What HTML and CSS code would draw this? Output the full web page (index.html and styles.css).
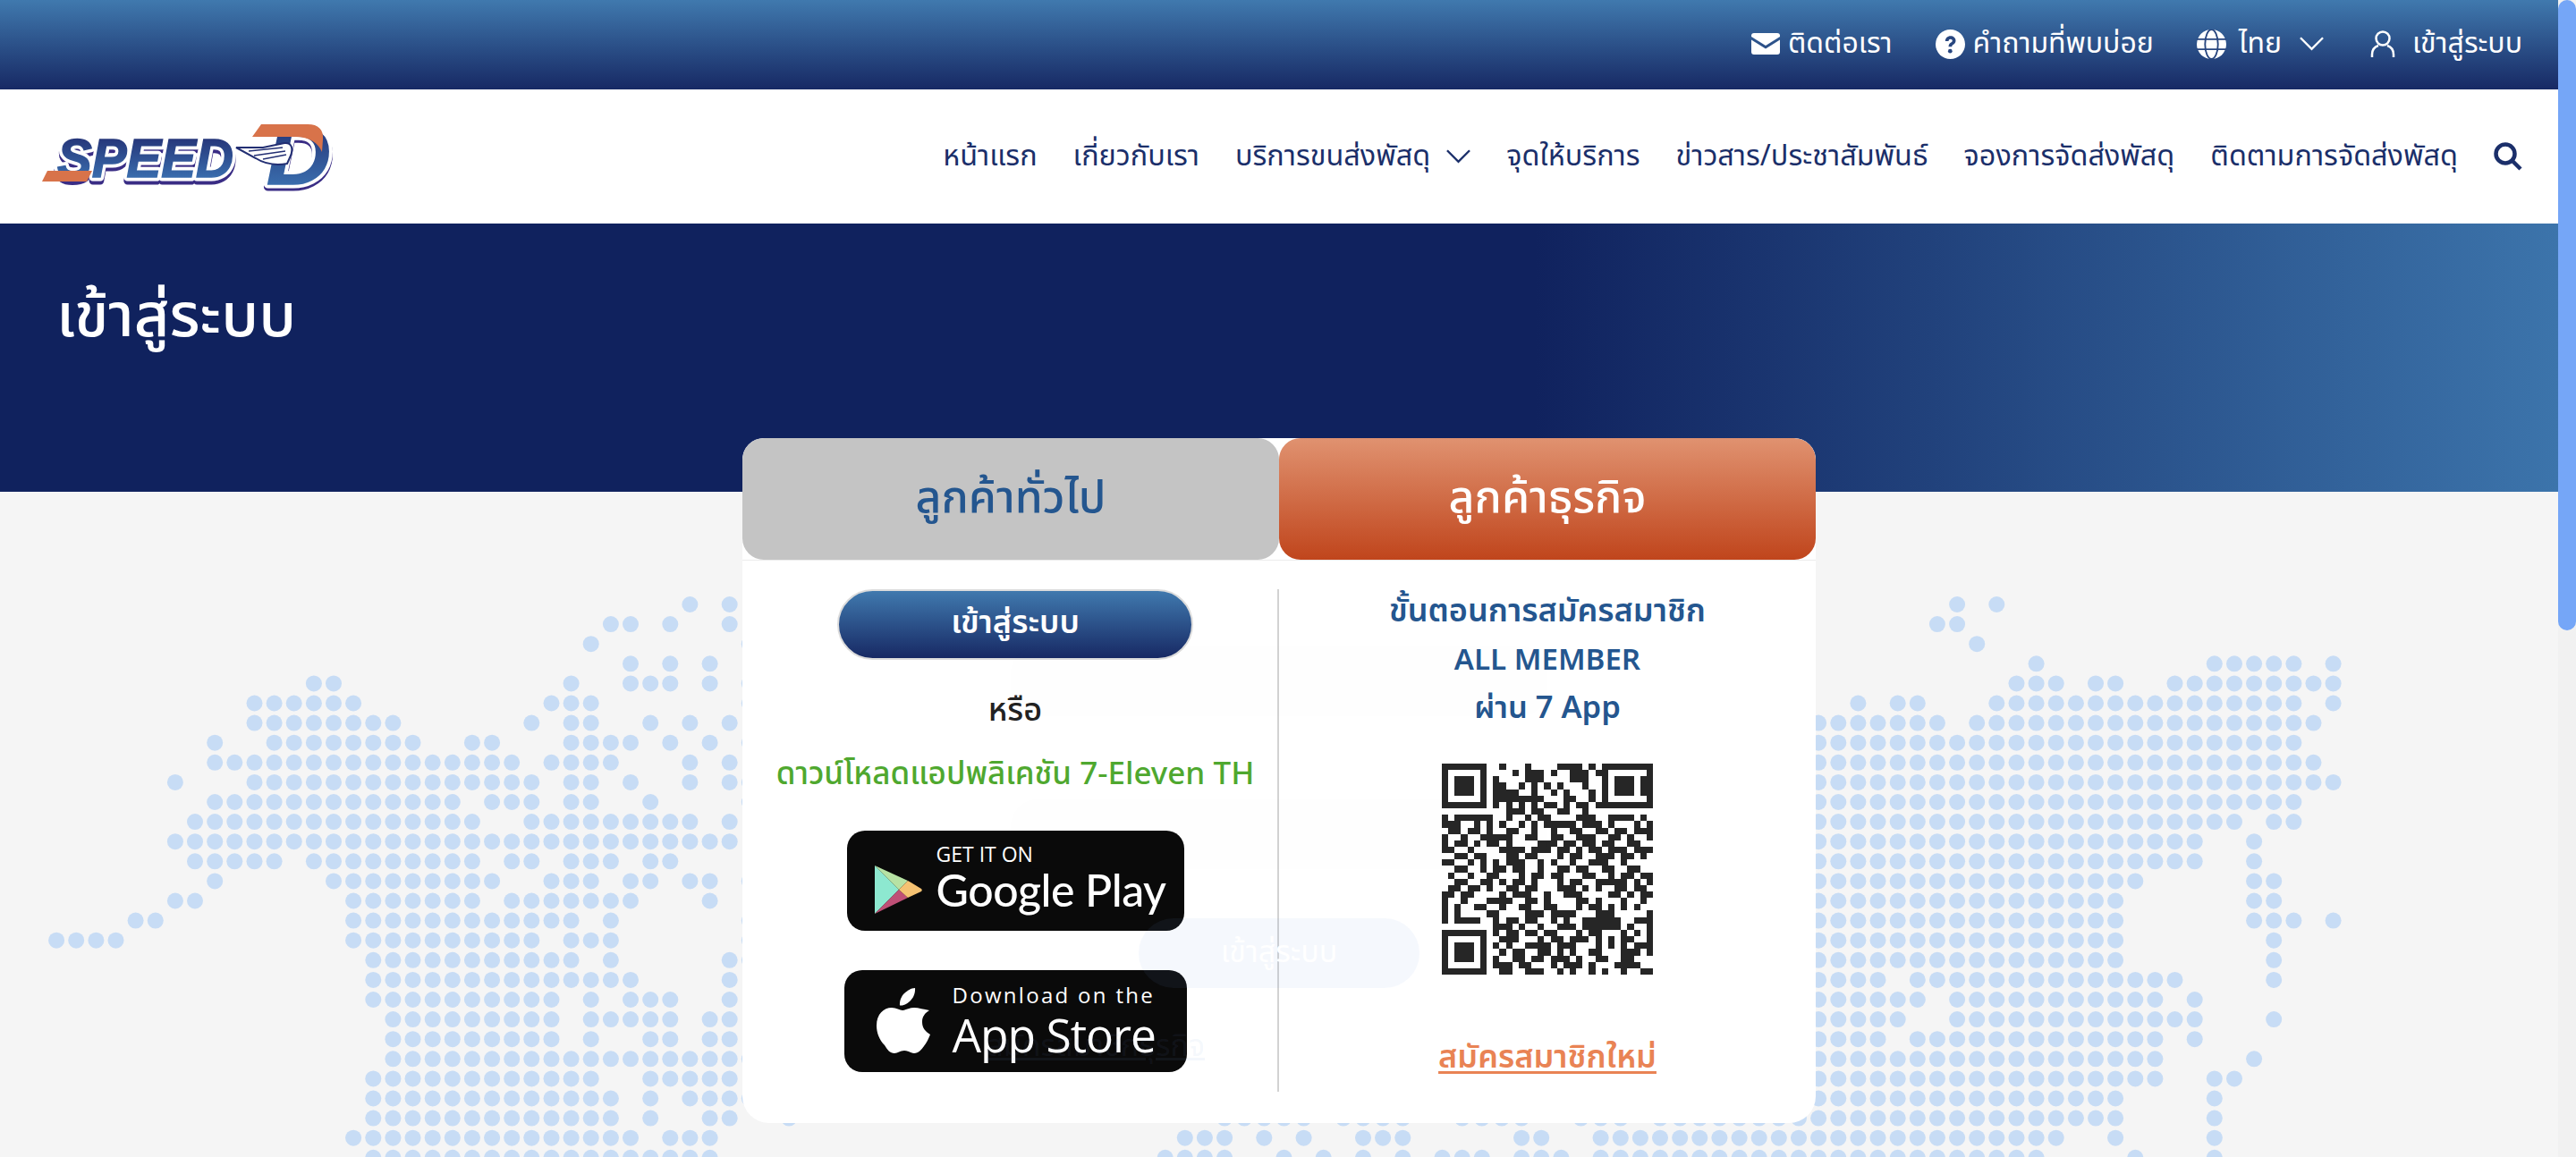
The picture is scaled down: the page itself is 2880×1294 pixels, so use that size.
FILE: index.html
```html
<!DOCTYPE html>
<html lang="th">
<head>
    <meta charset="UTF-8">
    <meta name="viewport" content="width=device-width, initial-scale=1.0">
    <title>เข้าสู่ระบบ</title>
    <link rel="stylesheet" href="styles.css">
</head>
<body>
<div class="window">
    <div class="page">
        <div class="topbar">
            <a class="toplink">
                <svg class="ico-mail" viewBox="0 0 32 24"><path d="M3 0h26a3 3 0 0 1 3 3v1L16 14 0 4V3a3 3 0 0 1 3-3z"/><path d="M0 7.500l16 10 16-10V21a3 3 0 0 1-3 3H3a3 3 0 0 1-3-3z"/></svg>
                ติดต่อเรา
            </a>
            <a class="toplink">
                <svg class="ico-round" viewBox="0 0 32 32"><circle cx="16" cy="16" r="16" fill="#fff"/><path d="M10.500 12.500c0-3.200 2.500-5.500 5.700-5.500 3.100 0 5.600 2 5.600 5 0 2.300-1.300 3.500-2.800 4.500-1 .7-1.300 1.100-1.300 2.200h-3.600c0-2.300.8-3.300 2.300-4.300 1.100-.8 1.800-1.300 1.800-2.300 0-1-.9-1.700-2-1.700-1.200 0-2 .8-2.100 2.100z" fill="#28467f"/><circle cx="15.800" cy="23.500" r="2.300" fill="#28467f"/></svg>
                คำถามที่พบบ่อย
            </a>
            <a class="toplink lang">
                <svg class="ico-round" viewBox="0 0 32 32"><circle cx="16" cy="16" r="16" fill="#fff"/><g fill="none" stroke="#28467f" stroke-width="1.800"><ellipse cx="16" cy="16" rx="7" ry="16"/><path d="M0 10.500h32M0 21.500h32"/></g></svg>
                ไทย
                <svg class="ico-chev" viewBox="0 0 28 16"><path d="M1 1l13 13L27 1"/></svg>
            </a>
            <a class="toplink">
                <svg class="ico-user" viewBox="0 0 28 32"><circle cx="14" cy="10" r="7.500"/><path d="M2 31v-3c0-6 4-9 7-10M26 31v-3c0-6-4-9-7-10"/></svg>
                เข้าสู่ระบบ
            </a>
        </div>

        <div class="navbar">
            <svg class="logo" viewBox="0 0 360 110">
                <defs>
                    <linearGradient id="logoBlue" x1="0" y1="0" x2="0" y2="1">
                        <stop offset="0.1" stop-color="#232f73"/>
                        <stop offset="1" stop-color="#3f7cbb"/>
                    </linearGradient>
                </defs>
                <path class="logo-back" d="M20 78l12-8h45l-6 18H20z"/>
                <text class="logo-text logo-shadow" x="38" y="83" textLength="197" lengthAdjust="spacingAndGlyphs">SPEED</text>
                <text class="logo-text logo-halo" x="38" y="79" textLength="197" lengthAdjust="spacingAndGlyphs">SPEED</text>
                <text class="logo-text logo-fill" x="38" y="79" textLength="197" lengthAdjust="spacingAndGlyphs">SPEED</text>
                <path fill="#d8734a" d="M27 72h50l-6 12H21z"/>
                <text class="logo-d logo-shadow" x="272" y="90" textLength="72" lengthAdjust="spacingAndGlyphs">D</text>
                <text class="logo-d logo-halo" x="272" y="87" textLength="72" lengthAdjust="spacingAndGlyphs">D</text>
                <text class="logo-d logo-fill" x="272" y="87" textLength="72" lengthAdjust="spacingAndGlyphs">D</text>
                <path fill="#d8734a" d="M256 34l10-14h52c12 0 18 6 17 17l-1 14c-4-10-14-17-30-17z"/>
                <path fill="#fff" stroke="#232f73" stroke-width="2" d="M238 46h30l24-5c8-1 10 6 7 14l-4 9c-12 2-24 1-35-6z"/>
                <path fill="none" stroke="#232f73" stroke-width="1.500" d="M252 50l38-4M258 55l35-5M268 59l26-5"/>
            </svg>
            <nav class="menu">
                <a>หน้าแรก</a>
                <a>เกี่ยวกับเรา</a>
                <a class="has-sub">บริการขนส่งพัสดุ <svg class="ico-chev" viewBox="0 0 28 16"><path d="M1 1l13 13L27 1"/></svg></a>
                <a>จุดให้บริการ</a>
                <a>ข่าวสาร/ประชาสัมพันธ์</a>
                <a>จองการจัดส่งพัสดุ</a>
                <a>ติดตามการจัดส่งพัสดุ</a>
                <svg class="ico-search" viewBox="0 0 32 32"><circle cx="13" cy="13" r="10.500"/><path d="M21 21l9 9"/></svg>
            </nav>
        </div>

        <div class="band">
            <h1>เข้าสู่ระบบ</h1>
        </div>

        <div class="content">
            <svg id="worldMap" class="world" width="2860" height="744"></svg>

            <div class="card">
                <div class="tabs">
                    <div class="tab tab-general">ลูกค้าทั่วไป</div>
                    <div class="tab tab-business">ลูกค้าธุรกิจ</div>
                </div>
                <div class="card-body">
                    <div class="col col-left">
                        <a class="btn-login">เข้าสู่ระบบ</a>
                        <div class="or">หรือ</div>
                        <div class="download">ดาวน์โหลดแอปพลิเคชัน 7-Eleven TH</div>
                        <a class="badge badge-play">
                            <svg class="play-mark" viewBox="0 0 54 58">
                                <path fill="#8de8d0" d="M1 2v54l27-27z"/>
                                <path fill="#b7e2a4" d="M1 2l27 27 10-10z"/>
                                <path fill="#bf4f76" d="M1 56l37-18-10-9z"/>
                                <path fill="#f5c272" d="M38 19l15 9c1 1 1 2 0 3l-15 7-10-9z"/>
                            </svg>
                            <span class="badge-text">
                                <span class="small">GET IT ON</span>
                                <span class="big">Google Play</span>
                            </span>
                        </a>
                        <a class="badge badge-apple">
                            <svg class="apple-mark" viewBox="0 0 60 74">
                                <path d="M43 0c.5 6-2 11-5 14-3 3-7 6-12 5.500C25.500 14 28 9 31 6c3-3 8-6 12-6z"/>
                                <path d="M59 25c-5 3-8 7-8 13 0 7 4 11 9 14-2 5-4 9-7 13-3 4-6 8-11 8-4 0-6-3-11-3s-7 3-11 3c-5 0-8-4-11-9C3 58 0 50 0 42c0-13 8-20 17-20 5 0 9 3 12 3s7-3 13-3c5 0 11 2 17 3z"/>
                            </svg>
                            <span class="badge-text">
                                <span class="small">Download on the</span>
                                <span class="big">App Store</span>
                            </span>
                        </a>
                    </div>
                    <div class="col col-right">
                        <div class="steps">
                            <div class="step-thai">ขั้นตอนการสมัครสมาชิก</div>
                            <div class="step-latin">ALL MEMBER</div>
                            <div class="step-app">ผ่าน 7 App</div>
                        </div>
                        <svg id="qrCode" class="qr" viewBox="0 0 33 33" shape-rendering="crispEdges"></svg>
                        <a class="signup">สมัครสมาชิกใหม่</a>
                    </div>
                </div>

                <!-- the form behind the popup shows through a little -->
                <div class="ghost">
                    <div class="ghost-label">อีเมล</div>
                    <div class="ghost-input">ระบุอีเมล</div>
                    <div class="ghost-label">รหัสผ่าน</div>
                    <div class="ghost-input"></div>
                    <div class="ghost-btn">เข้าสู่ระบบ</div>
                    <div class="ghost-link">สมัครสมาชิกธุรกิจ</div>
                </div>
            </div>
        </div>
    </div>
    <div class="scrollbar"><div class="thumb"></div></div>
</div>
<script src="page.js"></script>
</body>
</html>
```

FILE: styles.css
```css
html, body { margin: 0; padding: 0; height: 100%; overflow: hidden; }
body { font-family: "Noto Sans Thai", "Noto Sans", "Open Sans", sans-serif; background: #f5f5f5; }
a { color: inherit; text-decoration: none; }

.window { display: flex; height: 1294px; }
.page { flex: 1; min-width: 0; display: flex; flex-direction: column; overflow: hidden; }
.scrollbar { width: 20px; background: #f1f1f1; }
.thumb { height: 705px; background: #75a6f7; border-radius: 10px; }

.topbar {
    height: 100px;
    flex: none;
    box-sizing: border-box;
    padding: 0 40px 2px 0;
    display: flex;
    justify-content: flex-end;
    align-items: center;
    gap: 48px;
    color: #fff;
    font-size: 32px;
    background: linear-gradient(#4079ae, #172964);
}
.toplink { display: flex; align-items: center; gap: 9px; white-space: nowrap; }
.toplink.lang { gap: 14px; }
.ico-mail { width: 32px; height: 24px; fill: #fff; }
.ico-round { width: 33px; height: 33px; }
.ico-chev { width: 27px; height: 16px; fill: none; stroke: currentColor; stroke-width: 2.500; }
.ico-user { width: 28px; height: 32px; fill: none; stroke: #fff; stroke-width: 2.500; margin-right: 10px; }
.lang .ico-chev { margin: 0 4px 0 6px; }

.navbar {
    height: 150px;
    flex: none;
    box-sizing: border-box;
    background: #fff;
    padding: 0 40px 0 26px;
    display: flex;
    align-items: center;
    justify-content: space-between;
    position: relative;
    z-index: 1;
}
.logo { width: 360px; height: 110px; margin-top: -2px; }
.logo-text { font: italic 700 62px "Liberation Sans", sans-serif; }
.logo-d { font: italic 700 92px "Liberation Sans", sans-serif; }
.logo-shadow { fill: #3a2d85; stroke: #3a2d85; stroke-width: 9px; stroke-linejoin: round; }
.logo-halo { fill: #fff; stroke: #fff; stroke-width: 9px; stroke-linejoin: round; }
.logo-fill { fill: url(#logoBlue); stroke: url(#logoBlue); stroke-width: 1.500px; }
.logo-back { fill: #fff; }

.menu { display: flex; align-items: center; gap: 40px; color: #1b2f6a; font-size: 32.400px; white-space: nowrap; }
.has-sub { display: flex; align-items: center; gap: 18px; }
.ico-search { width: 32px; height: 32px; fill: none; stroke: #1b2f6a; stroke-width: 4.500; }

.band {
    height: 300px;
    flex: none;
    box-sizing: border-box;
    padding: 60px 63px;
    background: linear-gradient(90deg, #10225e 60%, #3c74ab 100%);
}
.band h1 { margin: 0; color: #fff; font-size: 68.500px; font-weight: 500; line-height: 90px; }

.content { flex: 1; position: relative; }
.world { position: absolute; left: 0; top: 0; fill: #c7dcf5; }

.card {
    position: relative;
    width: 1200px;
    margin: -60px 0 0 830px;
    height: 766px;
    box-sizing: border-box;
    background: #fff;
    border-radius: 24px 24px 30px 30px;
    overflow: hidden;
    display: flex;
    flex-direction: column;
}
.tabs { display: flex; height: 136px; flex: none; border-bottom: 1px solid #ececec; }
.tab {
    flex: 1;
    display: flex;
    align-items: center;
    justify-content: center;
    font-size: 50px;
    font-weight: 500;
    border-radius: 24px;
}
.tab-general { background: #c4c4c4; color: #24568f; }
.tab-business { background: linear-gradient(#e09270, #c0451c); color: #fff; }

.card-body { flex: 1; display: flex; padding-top: 32px; }
.col { width: 600px; box-sizing: border-box; height: 562px; display: flex; flex-direction: column; align-items: center; }
.col-left { border-right: 2px solid #d2d2d2; padding-left: 12px; }

.btn-login {
    width: 398px;
    height: 79px;
    flex: none;
    box-sizing: border-box;
    padding-bottom: 3px;
    border: 2px solid #dcdcdc;
    border-radius: 40px;
    background: linear-gradient(#4079ae, #172964);
    color: #fff;
    font-size: 36px;
    font-weight: 600;
    display: flex;
    align-items: center;
    justify-content: center;
}
.or { margin-top: 33px; font-size: 36px; font-weight: 500; color: #222; line-height: 48px; }
.download { margin-top: 24px; font-size: 35px; font-weight: 500; color: #4fa82f; line-height: 48px; white-space: nowrap; }

.badge {
    display: flex;
    align-items: center;
    flex: none;
    box-sizing: border-box;
    background: #0a0a0a;
    border-radius: 20px;
    color: #fff;
}
.badge-text { display: flex; flex-direction: column; }
.badge-play { width: 377px; height: 112px; margin-top: 38px; padding-left: 30px; gap: 16px; }
.badge-play .badge-text { margin-top: -5px; }
.badge-apple { width: 383px; height: 114px; margin-top: 44px; padding-left: 36px; gap: 25px; }
.play-mark { width: 54px; height: 58px; margin-top: 20px; }
.apple-mark { width: 60px; height: 74px; fill: #fff; }
.badge-play .small { font: 400 23px/24px "Open Sans", sans-serif; }
.badge-play .big { font: 500 50px/56px Lato, sans-serif; letter-spacing: -0.5px; }
.badge-apple .small { font: 400 24px/30px "Open Sans", sans-serif; letter-spacing: 2.300px; }
.badge-apple .big { font: 400 51.500px/58px "Open Sans", sans-serif; letter-spacing: -1px; }

.steps { color: #24568f; font-weight: 600; line-height: 54.500px; text-align: center; margin-top: -2px; }
.step-thai { font-size: 36px; }
.step-latin { font-size: 33px; }
.step-app { font-size: 34.500px; }
.qr { width: 236px; height: 236px; margin-top: 33px; fill: #262626; }
.signup {
    margin-top: 66px;
    color: #e98354;
    font-size: 36px;
    font-weight: 600;
    text-decoration: underline;
    text-underline-offset: 4px;
}

.ghost {
    position: absolute;
    left: 300px;
    top: 170px;
    width: 600px;
    display: flex;
    flex-direction: column;
    align-items: center;
    font-size: 34px;
    pointer-events: none;
}
.ghost-label { align-self: flex-start; color: rgba(60, 80, 130, 0.025); line-height: 50px; margin-bottom: 13px; }
.ghost-input {
    align-self: stretch;
    height: 78px;
    margin-bottom: 30px;
    padding-left: 55px;
    line-height: 78px;
    color: rgba(60, 80, 130, 0.025);
    background: rgba(90, 120, 180, 0.008);
    border-radius: 30px;
}
.ghost-btn {
    position: absolute;
    top: 367px;
    width: 314px;
    height: 78px;
    line-height: 78px;
    text-align: center;
    color: #fff;
    background: rgba(110, 150, 220, 0.07);
    border-radius: 39px;
}
.ghost-link {
    position: absolute;
    top: 485px;
    left: -100px;
    width: 317px;
    text-align: right;
    white-space: nowrap;
    color: rgba(110, 150, 220, 0.08);
    text-decoration: underline;
}
```

FILE: page.js
```js
// dot map rows: [from, to] ranges of filled columns, 22.135px grid
const ranges = {
    0: [[32],[34],[96],[98]],
    1: [[28,29],[31],[34],[95,96]],
    2: [[27],[35],[97]],
    3: [[29],[31],[33],[100],[109,113],[115]],
    4: [[13,14],[26],[29,31],[33],[35],[99,101],[103,104],[107,115]],
    5: [[10,15],[25,27],[35],[91],[93,94],[98,113],[115]],
    6: [[10,17],[24],[26,27],[30],[32],[34],[89,95],[97,114]],
    7: [[8],[11,18],[21,22],[26,29],[31],[33],[35],[89,113]],
    8: [[8,23],[25,28],[32],[34],[89,114]],
    9: [[6],[10,24],[26,27],[29],[32],[34,35],[89,115]],
    10: [[8,20],[22,24],[26,27],[30],[35],[89,113]],
    11: [[7,21],[24,32],[34],[89,110],[112,113]],
    12: [[6,34],[89,108],[111]],
    13: [[7,11],[13,21],[23,24],[26,28],[30,31],[89,108],[111]],
    14: [[8],[14,22],[25,27],[29,30],[32,33],[35],[89,105],[111,112]],
    15: [[6,7],[15,21],[23,29],[33],[89,104],[111,112]],
    16: [[4,5],[15,26],[28],[35],[89,104],[111,113],[115]],
    17: [[0,3],[15,24],[26,28],[35],[89,104],[112]],
    18: [[16,26],[28],[34,35],[89,104],[112]],
    19: [[16,29],[34],[89,92],[94,107],[112]],
    20: [[16,25],[27],[29,31],[34],[89,94],[96,106],[108]],
    21: [[17,25],[27,31],[33,34],[89,93],[96,108],[112]],
    22: [[17,25],[27],[30,31],[33,34],[89,92],[94,106],[108]],
    23: [[17,35],[89,106],[111]],
    24: [[16,27],[30,34],[89,106],[109,110]],
    25: [[16,28],[30],[32,35],[89,104],[109]],
    26: [[16,28],[30],[33,34],[37],[59,63],[65,68],[71,74],[77,79],[81,104],[109]],
    27: [[15,29],[31,33],[57,59],[61],[63],[66,68],[74,75],[78,101],[104],[109]],
    28: [[16,33],[56,59],[62],[64],[66],[68],[70,72],[74,76],[78,100],[105],[109]]
};

const worldMap = document.getElementById('worldMap');
let dots = '';
for (const row in ranges) {
    for (const range of ranges[row]) {
        const last = range.length > 1 ? range[1] : range[0];
        for (let col = range[0]; col <= last; col++) {
            dots += `<circle cx="${(63.1 + col * 22.135).toFixed(1)}" cy="${126 + row * 22.1}" r="9"/>`;
        }
    }
}
worldMap.innerHTML = dots;

const qrRows = [
    '111111100100010000111101011111111',
    '100000100001011101001110110000001',
    '101110101000011100001110010111011',
    '101110101100101010100010010111011',
    '101110101111001001010001010111011',
    '100000101111111100011001010000001',
    '111111101010101011010110111111111',
    '000000000011101100110010000000000',
    '101111110010010110000111001111010',
    '111001010100101011111011101000101',
    '011011010011001001001100110110111',
    '100100111110011001100111001101001',
    '101101011010000111011011011001100',
    '110010000111101110110101101110111',
    '001101100011011000101100111011010',
    '110010101011100101001001110010000',
    '001100101101100100110110011001100',
    '010010011000101101100011001011011',
    '001100110101101000101100111110101',
    '011011010011011000111010100110110',
    '110110000101110010011100001101011',
    '100100011110011010000110100010010',
    '101001100100110011000101101010100',
    '101000011000011101111000111000001',
    '101111001011011001010011111100111',
    '000000001110100100111011111101001',
    '111111101011011011000101100010101',
    '100000100111000101101110101011001',
    '101110101010011110111000101010111',
    '101110100101100110101001100011101',
    '101110101001101101110100110011000',
    '100000101110110001011101000111100',
    '111111100110011100101001010010011'
];

const qrCode = document.getElementById('qrCode');
let cells = '';
qrRows.forEach((row, y) => {
    [...row].forEach((cell, x) => {
        if (cell === '1') cells += `<rect x="${x}" y="${y}" width="1" height="1"/>`;
    });
});
qrCode.innerHTML = cells;
```
